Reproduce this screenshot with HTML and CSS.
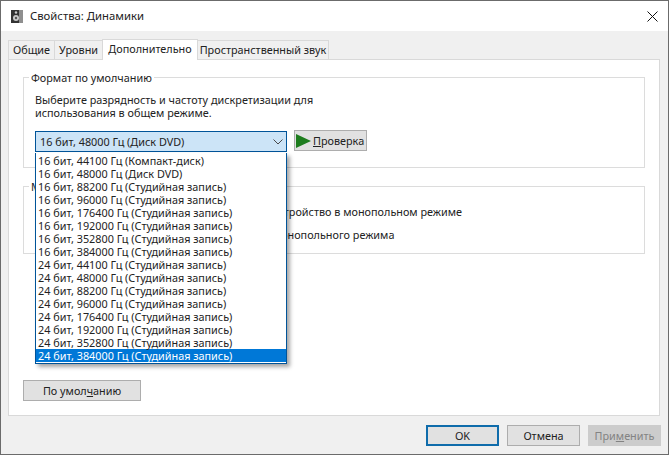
FILE: index.html
```html
<!DOCTYPE html>
<html lang="ru">
<head>
<meta charset="utf-8">
<title>Свойства: Динамики</title>
<link rel="stylesheet" href="styles.css">
</head>
<body>
<div class="window">
  <header class="titlebar">
    <svg class="app-icon" width="12" height="13" viewBox="0 0 12 13"><rect x="0" y="0" width="12" height="13" fill="#333"/><rect x="8" y="0" width="4" height="13" fill="#8f8f8f"/><circle cx="5" cy="8" r="3" fill="#c9c9c9"/><circle cx="5" cy="8" r="1.2" fill="#555"/><circle cx="5" cy="2.5" r="1.2" fill="#c9c9c9"/></svg>
    <span class="title">Свойства: Динамики</span>
    <svg class="close" width="11" height="11" viewBox="0 0 11 11"><path d="M0.5 0.5L10.5 10.5M10.5 0.5L0.5 10.5" stroke="#111" fill="none"/></svg>
  </header>
  <div class="body">
    <nav class="tabs">
      <span class="tab t1">Общие</span>
      <span class="tab t2">Уровни</span>
      <span class="tab active">Дополнительно</span>
      <span class="tab t4">Пространственный звук</span>
    </nav>
    <main class="panel">
      <section class="group g1">
        <span class="legend">Формат по умолчанию</span>
        <p class="desc">Выберите разрядность и частоту дискретизации для<br>использования в общем режиме.</p>
        <div class="format-row">
          <div class="select"><span>16 бит, 48000 Гц (Диск DVD)</span>
            <svg width="10" height="6" viewBox="0 0 10 6"><path d="M0.5 0.5L5 5L9.5 0.5" stroke="#4a4a4a" fill="none"/></svg>
          </div>
          <div class="btn test"><svg width="15" height="14" viewBox="0 0 15 14"><path d="M0 0L15 7L0 14Z" fill="#1e7d1e"/></svg><span><u>П</u>роверка</span></div>
        </div>
      </section>
      <section class="group g2">
        <span class="legend">Монопольный режим</span>
        <p class="opt o1">Разрешить приложениям использовать устройство в монопольном режиме</p>
        <p class="opt o2">Предоставить приоритет приложениям монопольного режима</p>
      </section>
      <div class="btn default">По умол<u>ч</u>анию</div>
      <ul class="list">
        <li>16 бит, 44100 Гц (Компакт-диск)</li>
        <li>16 бит, 48000 Гц (Диск DVD)</li>
        <li>16 бит, 88200 Гц (Студийная запись)</li>
        <li>16 бит, 96000 Гц (Студийная запись)</li>
        <li>16 бит, 176400 Гц (Студийная запись)</li>
        <li>16 бит, 192000 Гц (Студийная запись)</li>
        <li>16 бит, 352800 Гц (Студийная запись)</li>
        <li>16 бит, 384000 Гц (Студийная запись)</li>
        <li>24 бит, 44100 Гц (Студийная запись)</li>
        <li>24 бит, 48000 Гц (Студийная запись)</li>
        <li>24 бит, 88200 Гц (Студийная запись)</li>
        <li>24 бит, 96000 Гц (Студийная запись)</li>
        <li>24 бит, 176400 Гц (Студийная запись)</li>
        <li>24 бит, 192000 Гц (Студийная запись)</li>
        <li>24 бит, 352800 Гц (Студийная запись)</li>
        <li class="sel">24 бит, 384000 Гц (Студийная запись)</li>
      </ul>
    </main>
    <footer class="actions">
      <div class="btn ok">OK</div>
      <div class="btn">Отмена</div>
      <div class="btn disabled">При<u>м</u>енить</div>
    </footer>
  </div>
</div>
</body>
</html>
```
FILE: styles.css
```css
* { box-sizing: border-box; }
html, body { margin: 0; padding: 0; }
body { width: 669px; height: 455px; overflow: hidden; background: #fff; font-family: "Noto Sans", "Open Sans", sans-serif; font-size: 10.83px; color: #222; }
p { margin: 0; }
.window { width: 669px; height: 455px; border: 1px solid #6b6b6b; display: flex; flex-direction: column; }
.titlebar { height: 30px; background: #fff; display: flex; align-items: center; padding: 0 10px 0 10px; flex: none; }
.app-icon { flex: none; }
.title { margin-left: 7px; margin-bottom: 2px; font-size: 11.3px; flex: 1; }
.body { flex: 1; background: #f0f0f0; padding: 8px 8px 0 7px; display: flex; flex-direction: column; }
.tabs { display: flex; height: 20px; padding-left: 1px; align-items: flex-end; flex: none; position: relative; z-index: 1; }
.tab { height: 19px; background: #f0f0f0; border: 1px solid #d9d9d9; border-bottom: none; display: flex; align-items: center; justify-content: center; margin-left: -1px; white-space: nowrap; padding-bottom: 2px; }
.t1 { width: 47px; }
.t2 { width: 49px; }
.t4 { width: 132px; }
.active { height: 21px; width: 96px; background: #fff; position: relative; top: 1px; padding-bottom: 4px; }
.panel { height: 357px; background: #fff; border: 1px solid #d9d9d9; position: relative; padding: 17px 14px 0 14px; flex: none; }
.group { border: 1px solid #dcdcdc; position: relative; }
.g1 { height: 91px; padding: 15px 11px 0; }
.g2 { height: 68px; margin-top: 18px; }
.legend { position: absolute; left: 5px; top: -7px; background: #fff; padding: 0 2px; line-height: 14px; }
.desc { line-height: 13px; }
.format-row { display: flex; gap: 7px; margin-top: 12px; }
.select { width: 252px; height: 21px; background: #cce4f7; border: 1px solid #005499; display: flex; align-items: center; justify-content: space-between; padding: 0 3px 0 4px; }
.btn { width: 73px; height: 21px; background: #e1e1e1; border: 1px solid #adadad; display: flex; align-items: center; justify-content: center; }
.test { justify-content: flex-start; gap: 2px; padding-left: 1px; margin-top: -1px; }
.opt { position: absolute; left: 37px; white-space: nowrap; }
.o1 { top: 17px; }
.o2 { top: 40px; }
.default { width: 118px; position: absolute; left: 14px; top: 320px; }
.list { position: absolute; left: 26px; top: 93px; width: 252px; height: 211px; margin: 0; padding: 1px 0 0; list-style: none; background: #fff; border: 1px solid #005499; border-top: none; box-shadow: 3px 3px 4px rgba(0,0,0,.35); z-index: 2; }
.list li { height: 13px; line-height: 13px; padding-left: 2px; white-space: nowrap; }
.list li.sel { background: #0078d7; color: #fff; }
.actions { display: flex; justify-content: flex-end; gap: 8px; padding: 9px 0 0; margin-right: -1px; }
.ok { border: 2px solid #0f6cab; }
.disabled { background: #ccc; border-color: #ccc; color: #838383; }
```
